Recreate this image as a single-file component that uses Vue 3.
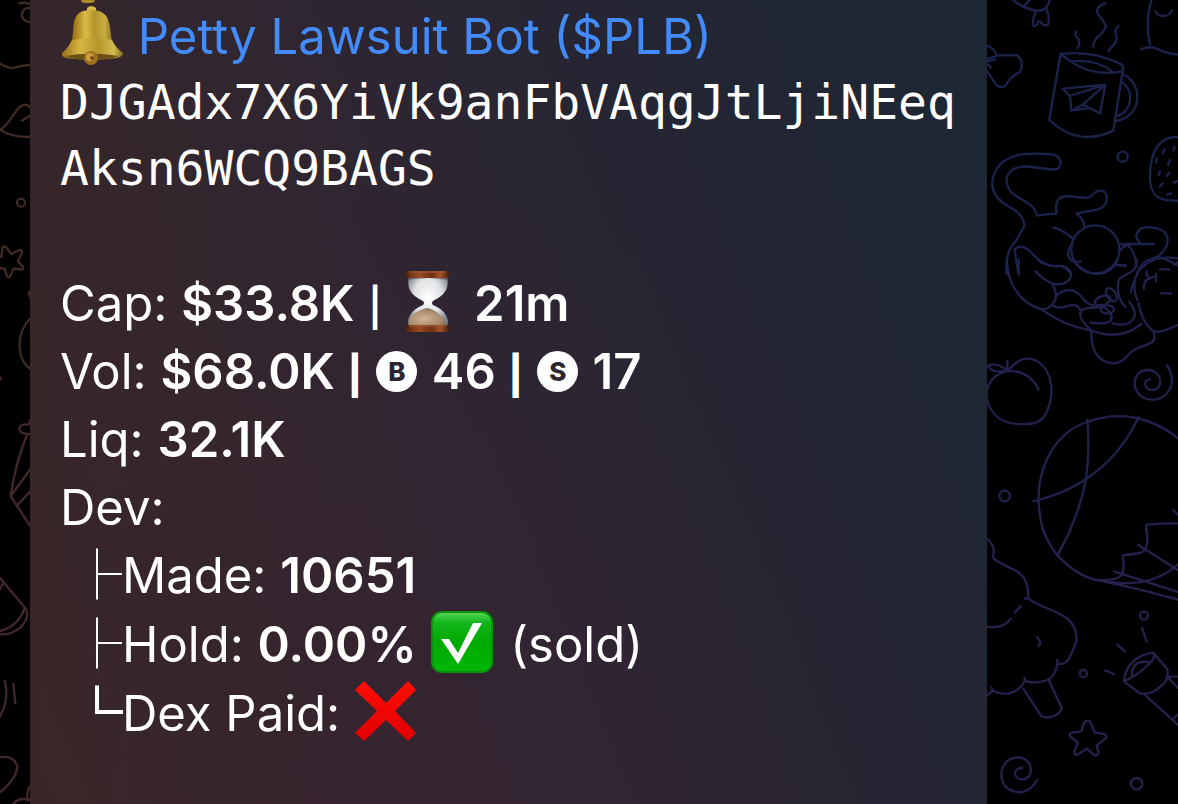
<script setup>
const buys = 46
const sells = 17
const branches = [
  { glyph: '├', label: 'Made:', value: '10651' },
  { glyph: '├', label: 'Hold:', value: '0.00%', mark: 'check', note: '(sold)' },
  { glyph: '└', label: 'Dex Paid:', mark: 'cross', last: true },
]
</script>

<template>
  <main class="chat">
    <div class="wallpaper warm" aria-hidden="true">
      <svg viewBox="0 0 90 2412">
        <g>
          <path d="M58 10Q76 4 94 14M94 26C78 18 64 32 66 48Q70 64 94 68M0 190Q20 204 40 204Q66 196 94 194M0 388C34 376 44 316 76 314Q90 316 98 334M0 388Q36 414 94 410M66 362L94 344" />
          <circle cx="63" cy="608" r="12" />
          <path d="M-14 776L4 770L8 742Q14 736 20 744L34 762L58 750Q68 750 66 758L54 784L70 802Q70 810 62 808L40 806L30 830Q24 834 20 826L14 806L-8 804M94 868L86 880L94 900M94 952C50 990 44 1080 94 1108M-4 1130Q8 1134 -4 1142" />
        </g>
        <g class="low" transform="translate(0 1200)">
          <path d="M94 54L86 74Q60 70 58 86Q60 104 94 102M82 102Q46 190 32 288L94 384M32 288L94 204M50 318L94 270M0 534L76 624Q92 652 62 682Q30 708 -4 702M74 624C60 664 36 684 -4 694M-4 574L8 552M14 842Q30 900 -4 956M40 852L46 910M-4 1072Q44 1064 52 1100Q48 1140 -4 1180M40 1212Q56 1190 94 1200M94 1154Q78 1170 84 1202" />
        </g>
      </svg>
    </div>

    <article class="bubble">
      <p class="title">
        <svg class="emoji bell" viewBox="0 0 64 66" role="img" aria-label="Bell">
          <defs>
            <linearGradient id="brass" x1="0" x2="1">
              <stop offset="0" stop-color="#7d5f12" />
              <stop offset=".2" stop-color="#b58c24" />
              <stop offset=".36" stop-color="#dcbd4a" />
              <stop offset=".55" stop-color="#b3942a" />
              <stop offset=".78" stop-color="#c9ae42" />
              <stop offset="1" stop-color="#735912" />
            </linearGradient>
            <linearGradient id="brim" x1="0" x2="1">
              <stop offset="0" stop-color="#98701a" />
              <stop offset=".3" stop-color="#d8b644" />
              <stop offset=".6" stop-color="#b8962c" />
              <stop offset=".85" stop-color="#d3b94e" />
              <stop offset="1" stop-color="#836819" />
            </linearGradient>
          </defs>
          <ellipse cx="28" cy="1" rx="7" ry="2" fill="#ad8a29" />
          <path d="M27 12V8Q31 4 36 8V12Z" fill="#d9b843" />
          <path d="M12 40C15 26 10 10 31 10C52 10 49 26 52 40L55 46H9Z" fill="url(#brass)" />
          <path d="M12 40Q31 36 52 40Q54 46 63 53Q63 57 56 58Q31 61 7 58Q1 57 2 53Q9 47 12 40Z" fill="url(#brim)" />
          <path d="M5 56Q31 51 59 56Q50 60 31 60Q14 60 5 56Z" fill="#6b4f17" />
          <circle cx="31" cy="58" r="7" fill="#a0701f" />
          <circle cx="30" cy="57" r="4" fill="#cf9c40" />
          <circle cx="32" cy="58" r="2" fill="#774e1b" />
        </svg>{{ ' ' }}
        <a href="#plb">Petty Lawsuit Bot ($PLB)</a>
      </p>
      <p class="address"><code>DJGAdx7X6YiVk9anFbVAqgJtLjiNEeqAksn6WCQ9BAGS</code></p>

      <p class="line">
        Cap: <b>$33.8K</b> <span class="bar">|</span>{{ ' ' }}
        <svg class="emoji spaced" viewBox="0 0 64 64" role="img" aria-label="Hourglass">
          <defs>
            <linearGradient id="wood" x1="0" x2="1">
              <stop offset="0" stop-color="#54240f" />
              <stop offset=".3" stop-color="#9c4b22" />
              <stop offset=".6" stop-color="#6e3015" />
              <stop offset=".8" stop-color="#a75228" />
              <stop offset="1" stop-color="#46200f" />
            </linearGradient>
            <radialGradient id="glass" cx=".5" cy=".4" r=".6">
              <stop offset="0" stop-color="#ffffff" />
              <stop offset=".6" stop-color="#dfe1e2" />
              <stop offset="1" stop-color="#80868c" />
            </radialGradient>
            <radialGradient id="sand" cx=".4" cy=".6" r=".65">
              <stop offset="0" stop-color="#d0b393" />
              <stop offset=".7" stop-color="#a88a6c" />
              <stop offset="1" stop-color="#776756" />
            </radialGradient>
          </defs>
          <path d="M13 8H51C54 21 47 27 37 32Q35 34 37 36C49 41 54 49 51 58H13C10 49 15 41 27 36Q29 34 27 32C17 27 10 21 13 8Z" fill="url(#glass)" />
          <path d="M13 8H51V11Q32 7 13 11Z" fill="#706f70" />
          <path d="M13 57C11 48 20 42 31 39Q45 42 51 57Z" fill="url(#sand)" />
          <rect x="10" y="2" width="43" height="7" rx="3" fill="url(#wood)" />
          <rect x="10" y="56" width="43" height="7" rx="3" fill="url(#wood)" />
          <path d="M13 3H50M13 57H50" stroke="#a85c36" />
        </svg>
        <b> 21m</b>
      </p>
      <p class="line">
        Vol: <b>$68.0K <span class="bar">|</span> <span class="coin">B</span> {{ buys }} <span class="bar">|</span> <span class="coin">S</span> {{ sells }}</b>
      </p>
      <p class="line">Liq: <b>32.1K</b></p>
      <p class="line">Dev:</p>
      <p v-for="b in branches" :key="b.label" class="line branch">
        <span class="tree" :class="{ last: b.last }">{{ b.glyph }}</span>{{ b.label }}
        <b v-if="b.value">{{ b.value }}</b>{{ ' ' }}
        <svg v-if="b.mark === 'check'" class="emoji spaced" viewBox="0 0 64 64" role="img" aria-label="Yes">
          <defs>
            <linearGradient id="green" x1="0" y1="0" x2="0" y2="1">
              <stop offset="0" stop-color="#5bd85b" />
              <stop offset=".18" stop-color="#12b51a" />
              <stop offset=".5" stop-color="#00a900" />
              <stop offset="1" stop-color="#00b806" />
            </linearGradient>
          </defs>
          <rect x="2" y="2" width="60" height="60" rx="10" fill="url(#green)" stroke="#07910c" stroke-width="2" />
          <path d="M11 29H19L28 43L43 13H52L28 54Z" fill="#fff" />
        </svg>
        <svg v-else-if="b.mark === 'cross'" class="emoji" viewBox="0 0 64 64" role="img" aria-label="No">
          <defs>
            <linearGradient id="red" x1="0" y1="0" x2="0" y2="1">
              <stop offset="0" stop-color="#ff0d05" />
              <stop offset="1" stop-color="#e00000" />
            </linearGradient>
          </defs>
          <path d="M10 2L32 24L54 2L62 11L41 32L62 54L54 62L32 41L10 62L1 54L23 32L1 11Z" fill="url(#red)" />
        </svg>
        {{ b.note }}
      </p>
    </article>

    <div class="wallpaper cool" aria-hidden="true">
      <svg viewBox="21 0 573 2412">
        <g>
          <path d="M94 -4Q130 26 170 32Q204 34 210 -4M130 22L152 -4M168 34Q158 54 158 76Q168 84 174 66Q180 60 186 72Q198 82 206 70Q208 46 200 28" />
          <path d="M18 136Q42 142 50 166H112Q134 188 120 216Q88 232 78 256Q64 266 50 256L18 208M18 178L50 168M24 184L46 178M20 190L34 204" />
          <path d="M290 94Q280 104 296 118Q302 132 292 144M376 10Q344 20 354 42Q370 60 378 78Q374 94 350 114Q342 122 340 140M416 78Q402 86 408 104Q416 124 392 144L386 154" />
          <path d="M242 162Q224 260 208 360Q296 442 400 392L428 214Q434 196 418 190Q334 150 242 162L272 184Q334 230 428 214M272 184Q350 176 396 214M428 222C490 250 490 350 406 364M424 244C468 276 454 340 408 348" />
          <path d="M248 266L376 254L360 340L308 314L274 332L270 288ZM270 288L376 254L308 314M274 332L328 324M274 332L308 314" />
          <path d="M516 -4Q494 60 510 134M484 148Q512 134 544 152Q566 162 600 164M526 34Q534 50 550 48Q570 48 576 30" />
          <circle cx="428" cy="470" r="15" />
          <path d="M600 412C540 404 508 452 510 540C514 594 540 604 600 602M554 448L548 460M584 440L580 452M530 474L528 488M570 480L564 496M540 514L536 526M568 518L560 528M548 550L540 560M600 540L582 548M574 580L562 584" />
          <path d="M172 646C160 606 126 604 98 580C68 550 74 506 126 500C170 496 214 518 236 504Q252 480 224 464C138 456 78 460 48 510C20 564 48 600 94 624C116 636 130 654 134 676C116 704 114 720 96 738C78 762 78 800 80 824" />
          <path d="M172 646L230 640Q220 590 260 588C320 592 326 602 344 578Q364 566 376 578C390 606 372 628 336 632L290 640Q310 656 314 680M220 682Q250 690 278 716M116 824Q108 780 104 748Q120 732 146 750C180 786 198 798 230 798Q256 794 274 824" />
          <circle cx="346" cy="748" r="72" />
          <path d="M278 730Q260 752 266 770Q276 792 302 784M418 734L440 732L522 732M440 732Q466 752 470 800M410 796H438M420 750L440 734M480 728C456 706 476 678 514 682C560 686 568 710 560 736Q546 772 500 782Q480 794 470 824M540 772Q566 780 600 800" />
        </g>
        <g class="mid" transform="translate(0 780)">
          <path d="M80 0C84 70 116 128 184 148Q250 196 334 212Q420 244 484 192M116 0V40M174 0Q196 20 232 18C270 14 286 48 260 66Q238 78 216 70Q190 60 166 34M216 70Q240 110 216 134Q206 148 184 148M226 110C264 74 292 92 314 122Q340 146 366 134M216 134Q232 148 258 140Q294 124 304 156M334 212C282 164 296 142 340 144C370 142 360 136 378 146Q404 166 390 184Q370 194 332 188M398 190C462 206 482 162 448 126" />
          <ellipse cx="368" cy="122" rx="24" ry="14" transform="rotate(-20 368 122)" />
          <ellipse cx="394" cy="104" rx="22" ry="13" transform="rotate(55 394 104)" />
          <ellipse cx="382" cy="148" rx="20" ry="12" />
          <path d="M280 0C320 56 390 54 412 0M412 14L438 18M470 0C472 54 410 34 414 76Q410 114 436 140M464 60L452 96M600 -4Q530 -16 494 16C454 44 460 92 472 120M476 130Q484 186 522 216Q554 216 600 192M500 34Q496 48 512 54L528 48M512 54Q490 58 492 86M528 42V64M540 28H568M542 100H574M582 14L600 4" />
          <path d="M334 212C332 276 356 304 396 310C440 310 434 282 472 264C506 252 534 250 520 214" />
          <path d="M84 332Q118 294 142 296C208 298 236 390 194 468Q178 490 144 492C82 496 52 480 30 444C6 396 26 346 84 332ZM82 302V332Q46 304 24 318Q38 342 84 332Q152 334 176 390" />
          <path d="M510 358C484 360 496 392 518 390C554 386 546 332 504 330C454 330 450 400 498 416C558 434 600 368 560 316" />
          <circle cx="74" cy="708" r="16" />
          <path d="M190 814C142 640 226 514 322 486C430 446 530 480 600 540M322 478C334 634 310 720 268 814M160 724Q380 672 476 472M600 790Q548 790 500 794L498 812M580 750L600 772" />
        </g>
        <g class="low" transform="translate(0 1590)">
          <path d="M190 0Q206 44 232 76L272 0M232 76Q294 140 350 150Q408 154 424 136C438 112 428 88 428 76C470 66 512 90 500 0M334 146Q468 174 600 210M350 150C440 168 528 166 600 98M474 44L600 124M402 124L600 188" />
          <path d="M18 24Q50 48 38 82C80 124 150 108 144 204C190 246 292 240 290 332Q282 356 270 380Q258 406 232 402Q226 440 202 450Q166 464 134 452Q124 480 88 490Q60 494 38 482L18 498M18 290Q72 298 92 266M104 248L122 228M144 204L134 206M172 322Q186 338 176 348M232 402V390M134 452V444M38 482L34 472M130 476L182 556Q196 568 222 558Q246 548 244 532L206 450" />
          <circle cx="492" cy="257" r="12" />
          <circle cx="310" cy="431" r="11" />
          <circle cx="470" cy="761" r="17" />
          <path d="M486 294L500 334M412 344L434 364M376 422L402 432" />
          <path d="M520 368L562 418Q568 454 538 472Q514 496 480 490L432 454C436 400 476 374 520 368Q530 384 500 408Q470 438 432 454M456 438C454 402 476 392 504 396M492 492L600 590M562 440H600M562 440L600 480M600 548L578 568" />
          <path d="M312 578Q322 566 332 578L344 608L374 612Q384 618 376 626L350 646L356 668Q352 680 342 674L320 656L292 674Q280 676 284 662L294 638L270 618Q266 610 278 608L304 604Z" />
          <path d="M126 714C98 714 100 746 124 748C162 750 166 688 116 682C56 684 52 754 84 776C120 798 152 784 172 750" />
        </g>
      </svg>
    </div>
  </main>
</template>

<style>
body {
  margin: 0;
  background: #000;
}
</style>

<style scoped>
.chat {
  display: grid;
  grid-template-columns: 30px 1fr 191px;
  min-height: 100vh;
  overflow: hidden;
  background: #000;
  color: #fff;
  font-family: Inter, "Liberation Sans", sans-serif;
  font-size: 49px;
  line-height: 68px;
}
.wallpaper svg {
  display: block;
  width: 100%;
  fill: none;
  stroke-width: 7;
  stroke-linecap: round;
  stroke-linejoin: round;
}
.warm { stroke: #422a24; }
.warm .low { stroke: #41272b; }
.cool { stroke: #1b224c; }
.cool .mid { stroke: #20224d; }
.cool .low { stroke: #25214c; }
.bubble {
  box-sizing: border-box;
  padding: 0 24px 0 30px;
  background:
    radial-gradient(ellipse at 35% 110%, rgba(56, 34, 52, 0.5), rgba(56, 34, 52, 0) 60%),
    linear-gradient(68deg, #382724 0%, #36262a 22%, #2f2631 44%, #262533 68%, #1e2734 94%);
}
p {
  margin: 0;
  white-space: nowrap;
}
.title {
  line-height: 64px;
}
.title a {
  color: #428bf9;
  text-decoration: none;
}
.address {
  margin-bottom: 68px;
  line-height: 66px;
  white-space: normal;
  word-break: break-all;
}
code {
  font-family: "DejaVu Sans Mono", monospace;
  font-size: 48px;
}
b {
  font-weight: 600;
}
.bar {
  font-size: 38px;
  font-weight: 600;
  line-height: 1;
}
b .bar {
  font-weight: 800;
}
.emoji {
  width: 64px;
  height: 64px;
  vertical-align: -12px;
}
.bell {
  height: 66px;
}
.spaced {
  margin-right: 2px;
}
.coin {
  display: inline-block;
  width: 41px;
  height: 41px;
  margin: 0 2px;
  border-radius: 50%;
  background: #fff;
  color: #2c2632;
  font-size: 26px;
  font-weight: 800;
  line-height: 41px;
  text-align: center;
  vertical-align: 8px;
}
.branch {
  padding-left: 12px;
}
.tree {
  font-family: "Noto Sans CJK JP", sans-serif;
  font-size: 50px;
  line-height: 1;
}
.tree.last {
  -webkit-text-stroke: 2px #fff;
}
</style>
